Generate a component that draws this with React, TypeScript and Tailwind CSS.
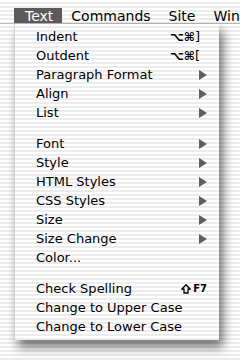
import React from 'react'

type Item = { label?: string; shortcut?: React.ReactNode; submenu?: boolean; sep?: boolean }

const cmd = (key: string) => (
  <span className="flex items-center mr-[7px]">
    <span className="text-[12px] font-bold">⌥⌘</span>
    <span className="text-[13px]">{key}</span>
  </span>
)

const items: Item[] = [
  { label: 'Indent', shortcut: cmd(']') },
  { label: 'Outdent', shortcut: cmd('[') },
  { label: 'Paragraph Format', submenu: true },
  { label: 'Align', submenu: true },
  { label: 'List', submenu: true },
  { sep: true },
  { label: 'Font', submenu: true },
  { label: 'Style', submenu: true },
  { label: 'HTML Styles', submenu: true },
  { label: 'CSS Styles', submenu: true },
  { label: 'Size', submenu: true },
  { label: 'Size Change', submenu: true },
  { label: 'Color...' },
  { sep: true },
  {
    label: 'Check Spelling',
    shortcut: (
      <span className="flex items-center">
        <svg width="10" height="10" viewBox="0 0 10 10" className="block mr-[2px]">
          <path d="M5 0.8 L9.2 5.2 L7 5.2 L7 9 L3 9 L3 5.2 L0.8 5.2 Z" fill="none" stroke="#000" strokeWidth="1.3" strokeLinejoin="miter" />
        </svg>
        <span className="text-[10px] font-bold">F7</span>
      </span>
    ),
  },
  { label: 'Change to Upper Case' },
  { label: 'Change to Lower Case' },
]

const Arrow = () => (
  <svg width="8" height="10" viewBox="0 0 8 10" className="block">
    <path d="M0 0 L8 5 L0 10 Z" fill="#5e5e5e" />
  </svg>
)

const App = () => {
  return (
    <div
      className="w-[240px] h-[360px] overflow-hidden bg-[repeating-linear-gradient(to_bottom,#ffffff_0px,#ffffff_2px,#ececec_2px,#ececec_4px)] text-black"
      style={{ fontFamily: '"DejaVu Sans", "Liberation Sans", sans-serif' }}
    >
      {/* menu bar */}
      <div className="h-[24px] flex items-stretch pl-[14px] border-b border-[#b8b8b8] text-[14px] leading-none">
        <div className="flex items-center pl-[11px] pr-[9px] mt-[8px] bg-[#5b5b5b] text-white">Text</div>
        <div className="flex items-center px-[9px] mt-[8px]">Commands</div>
        <div className="flex items-center px-[9px] mt-[8px]">Site</div>
        <div className="flex items-center px-[9px] mt-[8px] whitespace-nowrap">Wind</div>
      </div>

      {/* dropdown */}
      <div className="ml-[14px] w-[205px] pt-[3px] pb-[4px] border-l border-[#d0d0d0] shadow-[4px_7px_10px_rgba(0,0,0,0.55)] bg-[repeating-linear-gradient(to_bottom,#ffffff_0px,#ffffff_2px,#ececec_2px,#ececec_4px)]">
        {items.map((it, i) =>
          it.sep ? (
            <div key={i} className="h-[12px]" />
          ) : (
            <div key={i} className="h-[19px] flex items-center pl-[21px] pr-[12px] text-[13px] leading-none">
              <span className="flex-1 whitespace-nowrap">{it.label}</span>
              {it.shortcut}
              {it.submenu && <Arrow />}
            </div>
          )
        )}
      </div>
    </div>
  )
}

export default App
